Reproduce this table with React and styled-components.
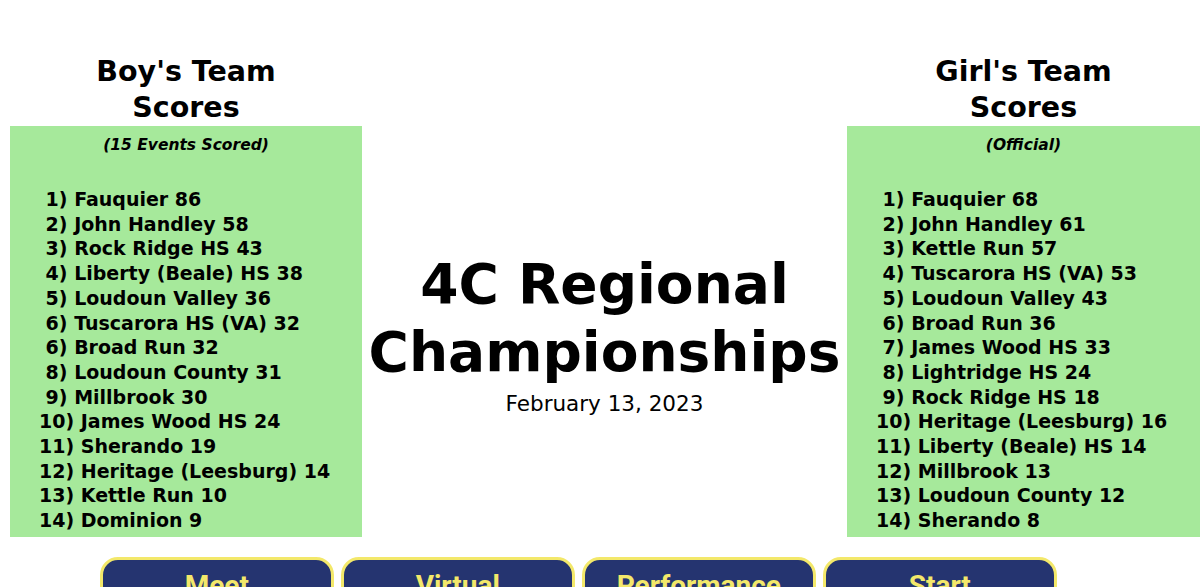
import React from 'react';
import styled, { createGlobalStyle } from 'styled-components';

const GlobalStyle = createGlobalStyle`
  html, body {
    margin: 0;
    padding: 0;
    background: #fff;
    overflow: hidden;
  }
  body {
    font-family: "DejaVu Sans", Verdana, sans-serif;
    color: #000;
  }
`;

const Page = styled.div`
  height: 587px;
  overflow: hidden;
  padding-left: 10px;
`;

const Board = styled.div`
  display: grid;
  grid-template-columns: 352px 1fr 353px;
  padding-top: 54px;
`;

const Side = styled.section`
  display: flex;
  flex-direction: column;
`;

const SideTitle = styled.h2`
  margin: 0;
  font-size: 28.5px;
  line-height: 36px;
  font-weight: bold;
  text-align: center;
  width: 220px;
  align-self: center;
`;

const ScoreBox = styled.div`
  background: #a6e99b;
  height: 411px;
  overflow: hidden;
  padding: 10px 0 0 29px;
  box-sizing: border-box;
`;

const Note = styled.div`
  font-size: 15.5px;
  line-height: 18px;
  font-weight: bold;
  font-style: italic;
  text-align: center;
  margin: 0 0 33px -29px;
`;

const Line = styled.div`
  font-size: 19px;
  line-height: 24.7px;
  font-weight: bold;
  white-space: pre;
`;

const Center = styled.div`
  display: flex;
  flex-direction: column;
  align-items: center;
  justify-content: center;
  padding-top: 76px;
`;

const MainTitle = styled.h1`
  margin: 0;
  font-size: 55px;
  line-height: 68px;
  font-weight: bold;
  text-align: center;
  white-space: nowrap;
`;

const MeetDate = styled.div`
  font-size: 21.5px;
  line-height: 26px;
  margin-top: 5px;
`;

const Nav = styled.nav`
  display: flex;
  gap: 7.5px;
  padding: 20px 0 0 90px;
`;

const NavButton = styled.button`
  box-sizing: border-box;
  width: 233.5px;
  height: 64px;
  flex: none;
  background: #253470;
  border: 3px solid #f3e86a;
  border-radius: 18px;
  color: #f3e86a;
  font-family: Roboto, "Liberation Sans", Arial, sans-serif;
  font-weight: bold;
  font-size: 28px;
  padding: 9px 0 0;
  display: flex;
  justify-content: center;
  align-items: flex-start;
  cursor: pointer;
`;

const boys = [
  ' 1) Fauquier 86',
  ' 2) John Handley 58',
  ' 3) Rock Ridge HS 43',
  ' 4) Liberty (Beale) HS 38',
  ' 5) Loudoun Valley 36',
  ' 6) Tuscarora HS (VA) 32',
  ' 6) Broad Run 32',
  ' 8) Loudoun County 31',
  ' 9) Millbrook 30',
  '10) James Wood HS 24',
  '11) Sherando 19',
  '12) Heritage (Leesburg) 14',
  '13) Kettle Run 10',
  '14) Dominion 9',
];

const girls = [
  ' 1) Fauquier 68',
  ' 2) John Handley 61',
  ' 3) Kettle Run 57',
  ' 4) Tuscarora HS (VA) 53',
  ' 5) Loudoun Valley 43',
  ' 6) Broad Run 36',
  ' 7) James Wood HS 33',
  ' 8) Lightridge HS 24',
  ' 9) Rock Ridge HS 18',
  '10) Heritage (Leesburg) 16',
  '11) Liberty (Beale) HS 14',
  '12) Millbrook 13',
  '13) Loudoun County 12',
  '14) Sherando 8',
];

const TeamScores = ({ title, note, rows }) => (
  <Side>
    <SideTitle>{title}</SideTitle>
    <ScoreBox>
      <Note>{note}</Note>
      {rows.map((r, i) => (
        <Line key={i}>{r}</Line>
      ))}
    </ScoreBox>
  </Side>
);

export default function App() {
  return (
    <Page>
      <GlobalStyle />
      <Board>
        <TeamScores title="Boy's Team Scores" note="(15 Events Scored)" rows={boys} />
        <Center>
          <MainTitle>
            4C Regional
            <br />
            Championships
          </MainTitle>
          <MeetDate>February 13, 2023</MeetDate>
        </Center>
        <TeamScores title="Girl's Team Scores" note="(Official)" rows={girls} />
      </Board>
      <Nav>
        <NavButton>Meet</NavButton>
        <NavButton>Virtual</NavButton>
        <NavButton>Performance</NavButton>
        <NavButton>Start</NavButton>
      </Nav>
    </Page>
  );
}
